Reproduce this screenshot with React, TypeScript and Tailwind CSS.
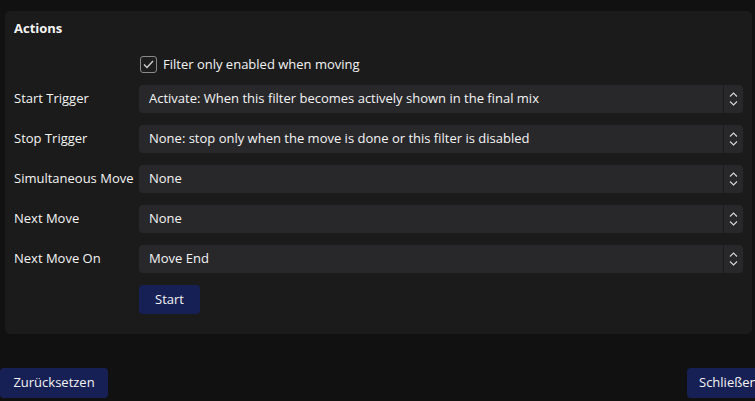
import React from "react";

const rows = [
  { label: "Start Trigger", value: "Activate: When this filter becomes actively shown in the final mix" },
  { label: "Stop Trigger", value: "None: stop only when the move is done or this filter is disabled" },
  { label: "Simultaneous Move", value: "None" },
  { label: "Next Move", value: "None" },
  { label: "Next Move On", value: "Move End" },
];

function Chevrons() {
  return (
    <svg width="9" height="14" viewBox="0 0 9 14" fill="none" stroke="#d8d8d8" strokeWidth="1.1">
      <path d="M1 4.5 4.5 1 8 4.5" />
      <path d="M1 9.5 4.5 13 8 9.5" />
    </svg>
  );
}

function Select({ value }: { value: string }) {
  return (
    <div className="flex h-[28px] w-[604px] items-stretch rounded-[4px] bg-[#28282b]">
      <div className="flex flex-1 items-center pl-[10px]">{value}</div>
      <div className="flex w-[20px] items-center justify-center border-l border-[#1c1c1e]">
        <Chevrons />
      </div>
    </div>
  );
}

export default function App() {
  return (
    <div
      className="h-[401px] w-[755px] overflow-hidden bg-[#111111] text-[13px] text-[#f4f4f4]"
      style={{ fontFamily: '"Open Sans", sans-serif' }}
    >
      <div className="ml-[5px] mt-[11px] flex h-[323px] w-[747px] flex-col rounded-[5px] bg-[#1b1b1b] pl-[9px] pt-[8px]">
        <div className="h-[18px] font-bold leading-[18px]">Actions</div>

        <div className="mt-[18px] flex items-center gap-[6px] pl-[126px]">
          <div className="flex h-[17px] w-[17px] items-center justify-center rounded-[3px] border border-[#8a8a8a] bg-[#1e1e1e]">
            <svg width="11" height="9" viewBox="0 0 11 9" fill="none" stroke="#d0d0d0" strokeWidth="1.4">
              <path d="M1 4.5 4 7.5 10 1" />
            </svg>
          </div>
          <span className="leading-[18px]">Filter only enabled when moving</span>
        </div>

        <div className="mt-[12px] flex flex-col gap-[12px]">
          {rows.map((r) => (
            <div key={r.label} className="flex items-center">
              <div className="w-[125px] shrink-0">{r.label}</div>
              <Select value={r.value} />
            </div>
          ))}
        </div>

        <div className="mt-[12px] pl-[125px]">
          <button className="h-[29px] w-[61px] rounded-[4px] bg-[#172055] text-[13px] text-[#f4f4f4]">Start</button>
        </div>
      </div>

      <div className="mt-[34px] flex justify-between">
        <button className="h-[30px] w-[108px] rounded-[4px] bg-[#172055] text-[13px] text-[#f4f4f4]">Zurücksetzen</button>
        <button className="h-[30px] w-[80px] shrink-0 -mr-[12px] rounded-[4px] bg-[#172055] pl-[12px] text-left text-[13px] text-[#f4f4f4]">
          Schließen
        </button>
      </div>
    </div>
  );
}
